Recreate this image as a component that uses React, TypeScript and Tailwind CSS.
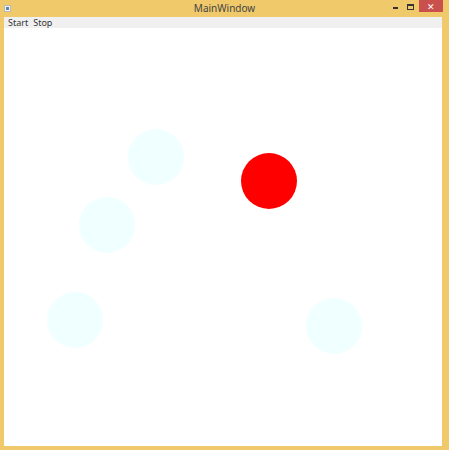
import { useState } from 'react';

interface Ball {
  id: number;
  left: number;
  top: number;
  active: boolean;
}

const initialBalls: Ball[] = [
  { id: 1, left: 124, top: 101, active: false },
  { id: 2, left: 75, top: 169, active: false },
  { id: 3, left: 43, top: 264, active: false },
  { id: 4, left: 302, top: 270, active: false },
  { id: 5, left: 237, top: 125, active: true },
];

function TitleBar() {
  return (
    <div className="relative flex h-[17px] items-center bg-[#f0c96b]">
      <div className="ml-[4px] flex h-[7px] w-[7px] items-center justify-center border border-[#b9b9b9] bg-[#f4f4f4]">
        <div className="h-[3px] w-[3px] bg-[#5a86a8]" />
      </div>
      <p className="absolute left-0 right-0 top-[2px] text-center text-[10px] leading-[12px] text-[#444]">MainWindow</p>
      <div className="ml-auto flex h-full items-start">
        <div className="mr-[9px] mt-[7px] h-[2px] w-[5px] bg-[#333]" />
        <div className="mr-[5px] mt-[4px] h-[6px] w-[7px] border border-[#333] border-t-2" />
        <div className="mr-[6px] flex h-[12px] w-[24px] items-center justify-center bg-[#c9504d] text-[9px] leading-none text-white">
          ✕
        </div>
      </div>
    </div>
  );
}

export default function App() {
  const [balls] = useState(initialBalls);

  return (
    <div className="h-[450px] w-[449px] overflow-hidden bg-[#f0c96b] font-['Noto_Sans',sans-serif]">
      <TitleBar />
      <div className="ml-[4px] mr-[7px] flex h-[429px] flex-col">
        <div className="flex h-[11px] items-center gap-[5px] bg-[#f0f0f0] px-[4px] text-[9px] leading-none text-[#333]">
          <span>Start</span>
          <span>Stop</span>
        </div>
        <div className="relative flex-1 bg-white">
          {balls.map((ball) => (
            <div
              key={ball.id}
              className={`absolute h-[56px] w-[56px] rounded-full ${ball.active ? 'bg-[#ff0000]' : 'bg-[#f0ffff]'}`}
              style={{ left: ball.left, top: ball.top }}
            />
          ))}
        </div>
      </div>
    </div>
  );
}
